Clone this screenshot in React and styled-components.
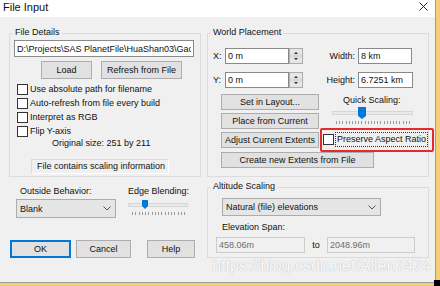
import React from "react"
import styled, { createGlobalStyle } from "styled-components"

const GlobalStyle = createGlobalStyle`
  html, body {
    margin: 0;
    padding: 0;
  }
  body {
    font-family: "Liberation Sans", Arial, sans-serif;
    font-size: 9px;
    color: #111;
  }
  * {
    box-sizing: border-box;
  }
`

const Frame = styled.div`
  position: relative;
  width: 440px;
  height: 286px;
  background: #f5cf74;
  overflow: hidden;
`

const Window = styled.div`
  width: 436px;
  height: 283px;
  border-right: 1px solid #9c9c9c;
  border-bottom: 1px solid #9c9c9c;
  background: #f0f0f0;
  display: flex;
  flex-direction: column;
`

const TitleBar = styled.div`
  height: 17px;
  background: #fff;
  display: flex;
  align-items: flex-start;
  justify-content: space-between;
  padding-left: 3px;
`

const Title = styled.span`
  font-size: 11px;
  line-height: 14px;
`

const CloseIcon = styled.svg`
  margin: 2px 7px 0 0;
`

const Body = styled.div`
  display: flex;
  padding: 16px 6px 0 9px;
`

const Column = styled.div`
  display: flex;
  flex-direction: column;
  width: ${(p) => p.w}px;
  margin-left: ${(p) => p.ml || 0}px;
`

const Group = styled.div`
  position: relative;
  border: 1px solid #dcdcdc;
  height: ${(p) => p.h}px;
  margin-top: ${(p) => p.mt || 0}px;
  display: flex;
  flex-direction: column;
  align-items: flex-start;
`

const Caption = styled.span`
  position: absolute;
  top: -7px;
  left: 3px;
  padding: 0 2px;
  line-height: 11px;
  background: #f0f0f0;
`

const TextBox = styled.input`
  font: inherit;
  color: ${(p) => (p.disabled ? "#6d6d6d" : "#111")};
  width: ${(p) => p.w}px;
  height: ${(p) => p.h || 16}px;
  margin: 0;
  padding: 0 2px;
  border: 1px solid ${(p) => (p.disabled ? "#cccccc" : "#8a8a8a")};
  background: ${(p) => (p.disabled ? "#f0f0f0" : "#fff")};
  outline: none;
`

const PathBox = styled(TextBox)`
  margin: 6px 0 0 4px;
`

const Button = styled.button`
  font: inherit;
  color: #111;
  width: ${(p) => p.w}px;
  height: ${(p) => p.h || 18}px;
  margin: 0 0 0 ${(p) => p.ml || 0}px;
  padding: 0;
  background: #e1e1e1;
  border: 1px solid ${(p) => (p.primary ? "#0078d7" : "#adadad")};
  box-shadow: ${(p) => (p.primary ? "inset 0 0 0 1px #0078d7" : "none")};
  white-space: nowrap;
`

const ButtonRow = styled.div`
  display: flex;
  margin-top: ${(p) => p.mt || 0}px;
  padding-left: ${(p) => p.pl || 0}px;
`

const CheckList = styled.div`
  margin-top: 3px;
  padding-left: 7px;
  display: flex;
  flex-direction: column;
`

const CheckRow = styled.label`
  display: flex;
  align-items: center;
  height: 14px;
  gap: 2px;
  white-space: nowrap;
`

const Box = styled.span`
  width: 11px;
  height: 11px;
  border: 1px solid #333;
  background: #fff;
  flex: none;
`

const Note = styled.div`
  line-height: 10px;
  padding-left: 42px;
`

const InfoBox = styled.div`
  margin: 11px 0 0 21px;
  width: 138px;
  height: 15px;
  line-height: 13px;
  padding-left: 5px;
  border: 1px solid #dadada;
  border-right-color: #fff;
  border-bottom-color: #fff;
`

const LowerRow = styled.div`
  display: flex;
  margin-top: 8px;
`

const Field = styled.div`
  display: flex;
  flex-direction: column;
  width: ${(p) => p.w}px;
  padding-left: ${(p) => p.pl || 0}px;
`

const Label = styled.div`
  line-height: 12px;
  padding-left: ${(p) => p.pl || 0}px;
  margin-top: ${(p) => p.mt || 0}px;
  white-space: nowrap;
`

const Select = styled.div`
  display: flex;
  align-items: center;
  justify-content: space-between;
  width: ${(p) => p.w}px;
  height: ${(p) => p.h}px;
  margin: ${(p) => p.m || "2px 0 0 0"};
  padding: 0 4px 0 3px;
  background: #e5e5e5;
  border: 1px solid #acacac;
`

const Chevron = () => (
  <svg width="8" height="5" viewBox="0 0 8 5">
    <path d="M0.5 0.5 L4 4 L7.5 0.5" fill="none" stroke="#555" strokeWidth="1" />
  </svg>
)

const SliderSvg = styled.svg`
  display: block;
  margin: ${(p) => p.m || "0"};
`

const Slider = ({ width, thumbX, thumbW, thumbH, trackY, tickY, ticks, margin }) => {
  const tickEls = []
  const step = (width - 8) / (ticks - 1)
  for (let i = 0; i < ticks; i++) {
    const x = Math.round(4 + i * step) + 0.5
    tickEls.push(<line key={i} x1={x} x2={x} y1={tickY} y2={tickY + 3} stroke="#9a9a9a" />)
  }
  const ty = trackY - Math.round(thumbH / 2) + 1
  return (
    <SliderSvg m={margin} width={width} height={tickY + 4}>
      <rect x="0.5" y={trackY - 0.5} width={width - 1} height="3" fill="#e7eaea" stroke="#d6d6d6" />
      <path
        d={`M${thumbX} ${ty} h${thumbW} v${thumbH - 3} l-${thumbW / 2} 3 l-${thumbW / 2} -3 Z`}
        fill="#007ad9"
      />
      {tickEls}
    </SliderSvg>
  )
}

const FieldRow = styled.div`
  display: flex;
  align-items: center;
  height: 16px;
  margin-top: ${(p) => p.mt}px;
`

const AxisLabel = styled.span`
  width: 17px;
  padding-left: 5px;
`

const SizeLabel = styled.span`
  width: 52px;
  text-align: right;
  margin-right: 3px;
`

const Spinner = () => (
  <svg width="14" height="16" viewBox="0 0 14 16">
    <rect x="0.5" y="0.5" width="13" height="15" fill="#e6e6e6" stroke="#adadad" />
    <line x1="1" x2="13" y1="8" y2="8" stroke="#c4c4c4" />
    <path d="M5 6 L7 4 L9 6 Z" fill="#222" />
    <path d="M5 10 L7 12 L9 10 Z" fill="#222" />
  </svg>
)

const Middle = styled.div`
  display: flex;
  margin-top: 6px;
`

const ButtonStack = styled.div`
  display: flex;
  flex-direction: column;
  gap: 3px;
  padding-left: 13px;
`

const ScalingSide = styled.div`
  display: flex;
  flex-direction: column;
  margin-left: 1px;
`

const Preserve = styled.label`
  position: relative;
  display: flex;
  align-items: center;
  height: 15px;
  margin: 7px 0 0 3px;
  gap: 1px;
  white-space: nowrap;

  &::after {
    content: "";
    position: absolute;
    top: -4px;
    left: -3px;
    right: -6px;
    bottom: -5px;
    border: 2px solid #e52b2b;
    border-radius: 2px;
  }
`

const FocusText = styled.span`
  border: 1px dotted #333;
  line-height: 13px;
  padding: 0 1px;
`

const SpanRow = styled.div`
  display: flex;
  align-items: center;
  margin: 4px 0 0 8px;
`

const ToLabel = styled.span`
  width: 22px;
  text-align: center;
`

const Watermark = styled.div`
  position: absolute;
  top: 258px;
  right: 9px;
  font-size: 16px;
  line-height: 16px;
  color: #fbfbfb;
  text-shadow: 0 0 1px #c2c2c2, 0 0 1px #c2c2c2;
  pointer-events: none;
`

const Corner = styled.div`
  position: absolute;
  right: 0;
  bottom: 0;
  width: 6px;
  height: 6px;
  background: #000;
`

const App = () => (
  <Frame>
    <GlobalStyle />
    <Window>
      <TitleBar>
        <Title>File Input</Title>
        <CloseIcon width="9" height="9" viewBox="0 0 9 9">
          <path d="M0.5 0.5 L8.5 8.5 M8.5 0.5 L0.5 8.5" stroke="#222" strokeWidth="1" />
        </CloseIcon>
      </TitleBar>
      <Body>
        <Column w={192}>
          <Group h={144}>
            <Caption>File Details</Caption>
            <PathBox
              w={180}
              h={17}
              readOnly
              value="D:\Projects\SAS PlanetFile\HuaShan03\GaoDe"
            />
            <ButtonRow mt={4} pl={31}>
              <Button w={51}>Load</Button>
              <Button w={81} ml={9}>Refresh from File</Button>
            </ButtonRow>
            <CheckList>
              <CheckRow><Box />Use absolute path for filename</CheckRow>
              <CheckRow><Box />Auto-refresh from file every build</CheckRow>
              <CheckRow><Box />Interpret as RGB</CheckRow>
              <CheckRow><Box />Flip Y-axis</CheckRow>
            </CheckList>
            <Note>Original size: 251 by 211</Note>
            <InfoBox>File contains scaling information</InfoBox>
          </Group>
          <LowerRow>
            <Field w={119} pl={7}>
              <Label pl={4}>Outside Behavior:</Label>
              <Select w={100} h={19}>
                Blank
                <Chevron />
              </Select>
            </Field>
            <Field w={70}>
              <Label>Edge Blending:</Label>
              <Slider
                width={60}
                thumbX={14}
                thumbW={6}
                thumbH={9}
                trackY={5}
                tickY={13}
                ticks={17}
                margin="2px 0 0 0"
              />
            </Field>
          </LowerRow>
          <ButtonRow mt={22} pl={1}>
            <Button w={61} primary>OK</Button>
            <Button w={55} ml={5}>Cancel</Button>
            <Button w={48} ml={16}>Help</Button>
          </ButtonRow>
        </Column>
        <Column w={222} ml={6}>
          <Group h={144}>
            <Caption>World Placement</Caption>
            <FieldRow mt={14}>
              <AxisLabel>X:</AxisLabel>
              <TextBox w={64} readOnly value="0 m" />
              <Spinner />
              <SizeLabel>Width:</SizeLabel>
              <TextBox w={54} readOnly value="8 km" />
            </FieldRow>
            <FieldRow mt={8}>
              <AxisLabel>Y:</AxisLabel>
              <TextBox w={64} readOnly value="0 m" />
              <Spinner />
              <SizeLabel>Height:</SizeLabel>
              <TextBox w={55} readOnly value="6.7251 km" />
            </FieldRow>
            <Middle>
              <ButtonStack>
                <Button w={98} h={16}>Set in Layout...</Button>
                <Button w={98} h={16}>Place from Current</Button>
                <Button w={98} h={16}>Adjust Current Extents</Button>
              </ButtonStack>
              <ScalingSide>
                <Label pl={23}>Quick Scaling:</Label>
                <Slider
                  width={81}
                  thumbX={26}
                  thumbW={8}
                  thumbH={12}
                  trackY={6}
                  tickY={15}
                  ticks={24}
                  margin="0 0 0 12px"
                />
                <Preserve>
                  <Box />
                  <FocusText>Preserve Aspect Ratio</FocusText>
                </Preserve>
              </ScalingSide>
            </Middle>
            <ButtonRow mt={4} pl={13}>
              <Button w={153} h={16}>Create new Extents from File</Button>
            </ButtonRow>
          </Group>
          <Group h={71} mt={10}>
            <Caption>Altitude Scaling</Caption>
            <Select w={159} h={18} m="10px 0 0 14px">
              Natural (file) elevations
              <Chevron />
            </Select>
            <Label pl={14} mt={5}>Elevation Span:</Label>
            <SpanRow>
              <TextBox w={89} disabled value="458.06m" readOnly />
              <ToLabel>to</ToLabel>
              <TextBox w={88} disabled value="2048.96m" readOnly />
            </SpanRow>
          </Group>
        </Column>
      </Body>
    </Window>
    <Watermark>https://blog.csdn.net/Allen7474</Watermark>
    <Corner />
  </Frame>
)

export default App
